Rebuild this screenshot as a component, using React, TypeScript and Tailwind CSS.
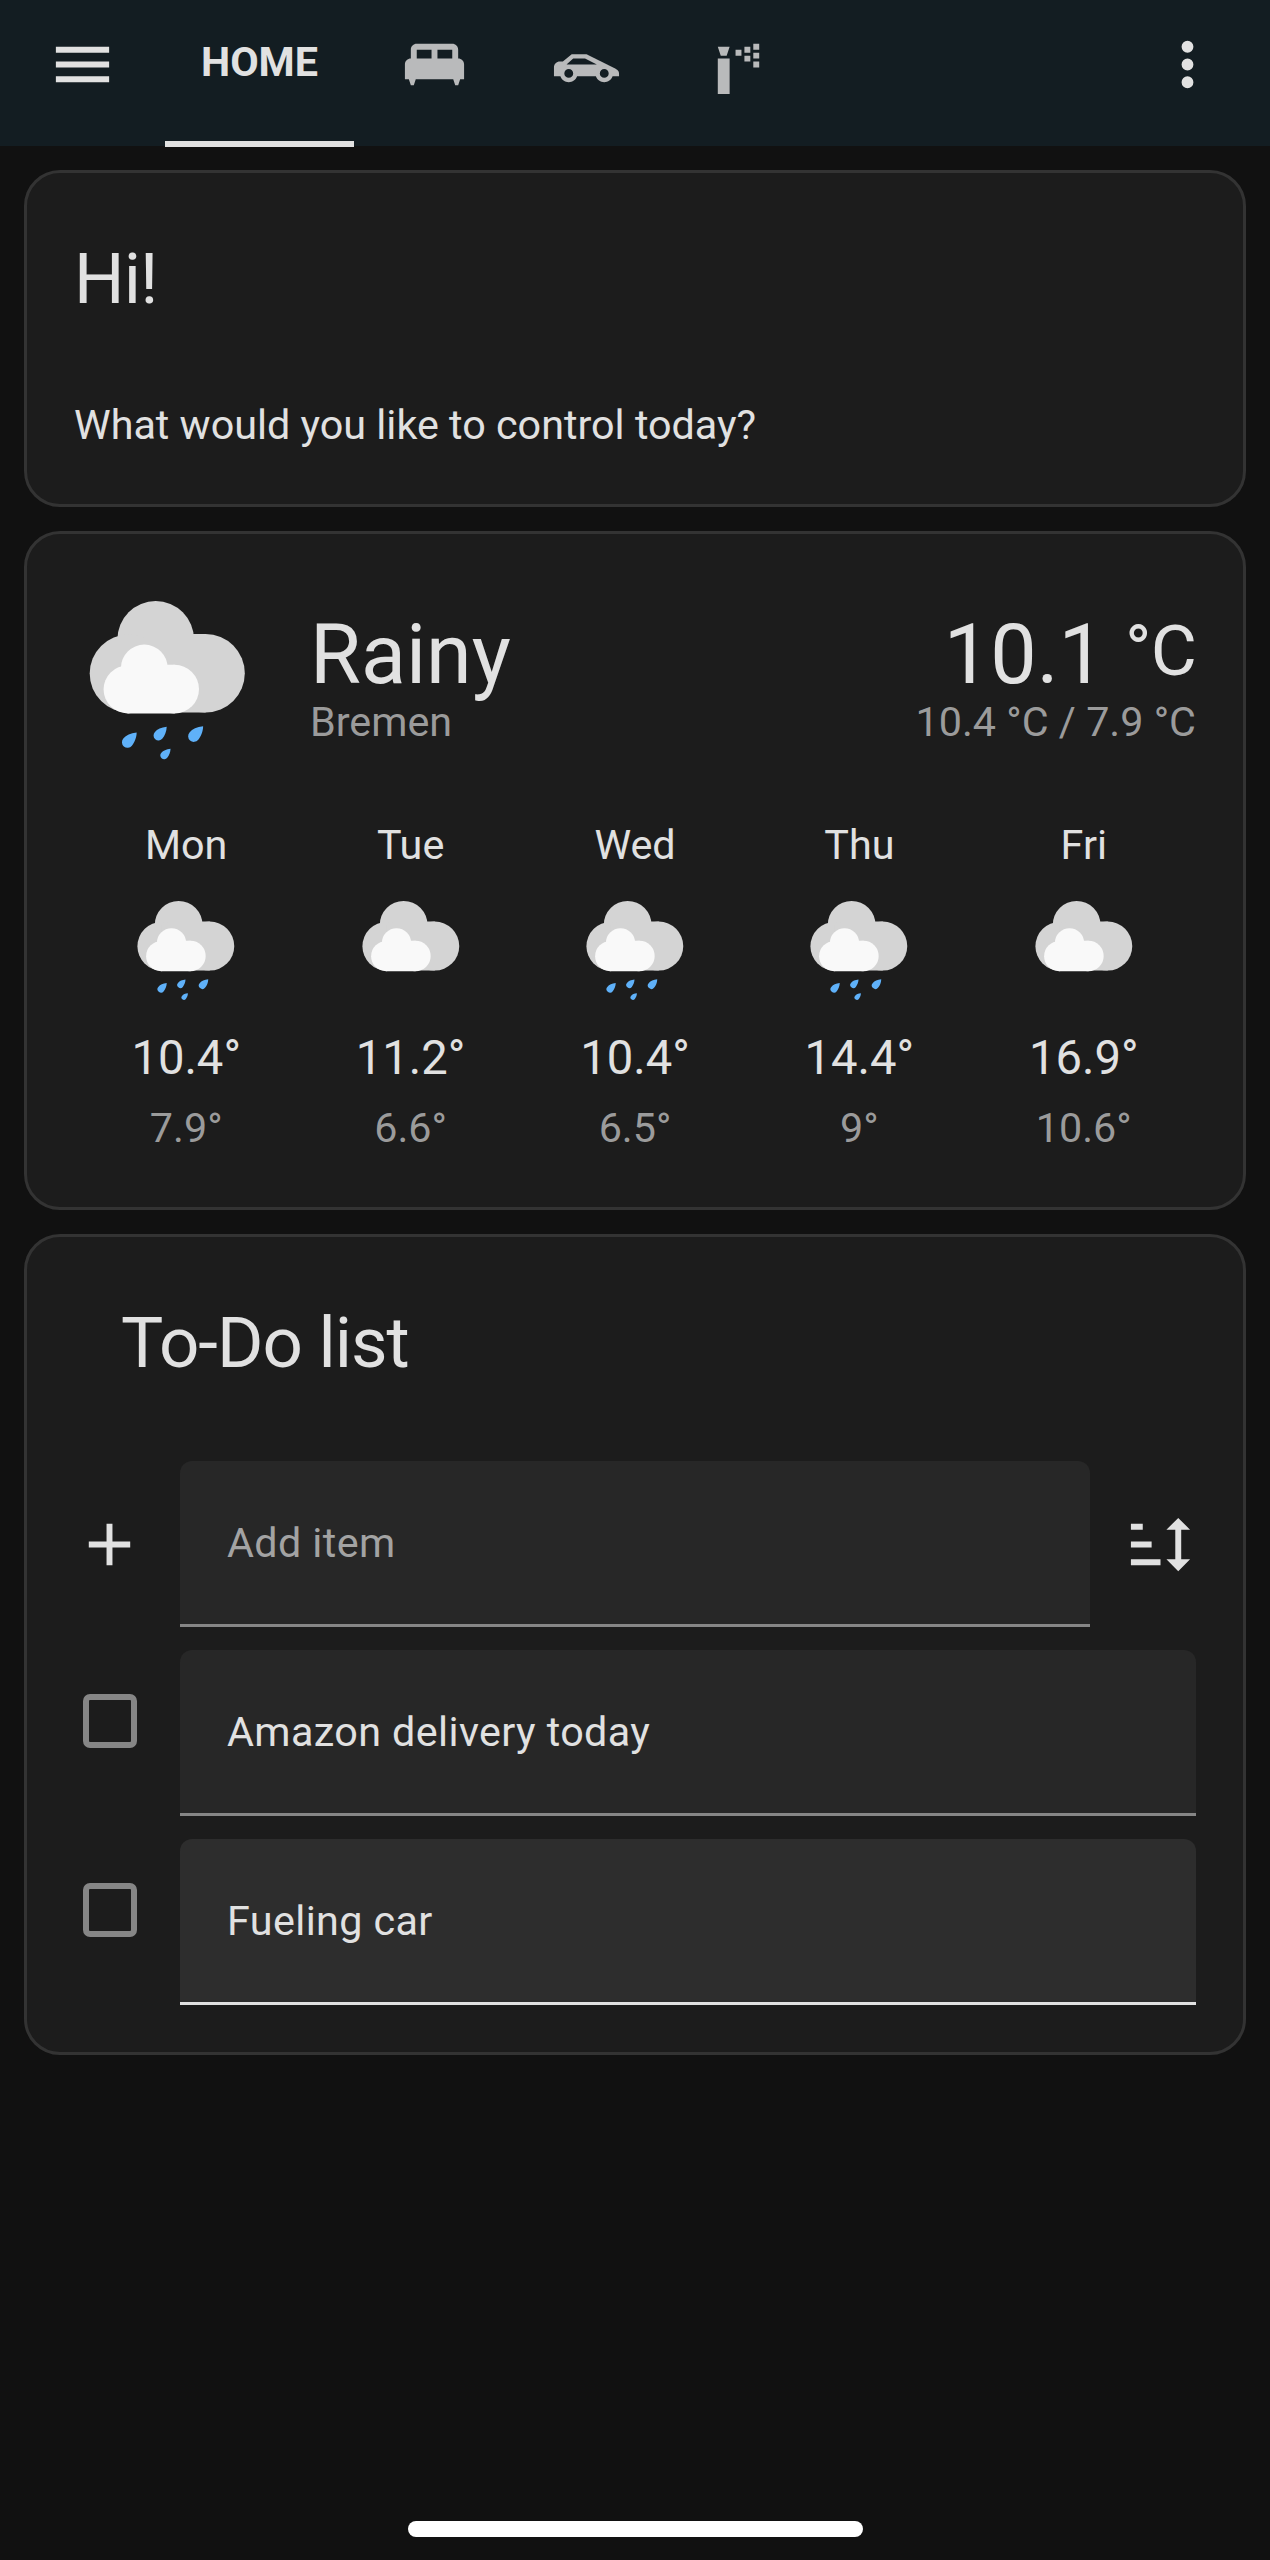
import type { ReactNode } from "react";
import { clsx } from "clsx";

interface ForecastDay {
  day: string;
  condition: "rainy" | "cloudy";
  high: string;
  low: string;
}

interface TodoItem {
  id: number;
  summary: string;
  active: boolean;
}

const forecast: ForecastDay[] = [
  { day: "Mon", condition: "rainy", high: "10.4°", low: "7.9°" },
  { day: "Tue", condition: "cloudy", high: "11.2°", low: "6.6°" },
  { day: "Wed", condition: "rainy", high: "10.4°", low: "6.5°" },
  { day: "Thu", condition: "rainy", high: "14.4°", low: "9°" },
  { day: "Fri", condition: "cloudy", high: "16.9°", low: "10.6°" },
];

const todos: TodoItem[] = [
  { id: 1, summary: "Amazon delivery today", active: false },
  { id: 2, summary: "Fueling car", active: true },
];

const icons = {
  menu: "M3 6H21V8H3V6M3 11H21V13H3V11M3 16H21V18H3V16Z",
  dots: "M12 16A2 2 0 0 1 14 18A2 2 0 0 1 12 20A2 2 0 0 1 10 18A2 2 0 0 1 12 16M12 10A2 2 0 0 1 14 12A2 2 0 0 1 12 14A2 2 0 0 1 10 12A2 2 0 0 1 12 10M12 4A2 2 0 0 1 14 6A2 2 0 0 1 12 8A2 2 0 0 1 10 6A2 2 0 0 1 12 4Z",
  bed: "M4 10C2.9 10 2 10.9 2 12V17H3.33L4 19H5L5.67 17H18.33L19 19H20L20.67 17H22V12C22 10.9 21.1 10 20 10V7C20 5.9 19.1 5 18 5H6C4.9 5 4 5.9 4 7V10M11 10H6V7H11V10M18 10H13V7H18V10Z",
  car: "M12 8.5H7L4 11H3C1.89 11 1 11.89 1 13V16H3.17C3.6 17.2 4.73 18 6 18C7.27 18 8.4 17.2 8.82 16H15.17C15.6 17.2 16.73 18 18 18C19.27 18 20.4 17.2 20.82 16H23V15C23 13.89 21.97 13.53 21 13L12 8.5M5.25 12L7.5 10H11.5L15.5 12H5.25M6 13.5A1.5 1.5 0 0 1 7.5 15A1.5 1.5 0 0 1 6 16.5A1.5 1.5 0 0 1 4.5 15A1.5 1.5 0 0 1 6 13.5M18 13.5A1.5 1.5 0 0 1 19.5 15A1.5 1.5 0 0 1 18 16.5A1.5 1.5 0 0 1 16.5 15A1.5 1.5 0 0 1 18 13.5Z",
  sprinkler:
    "M5 10H9V22H5V10M5 6H9L8 9H6L5 6M11 7H13V9H11V7M14 6H16V8H14V6M14 9H16V11H14V9M17 5H19V7H17V5M17 8H19V10H17V8M17 11H19V13H17V11Z",
  plus: "M19 13H13V19H11V13H5V11H11V5H13V11H19V13Z",
  sort: "M18 21L14 17H17V7H14L18 3L22 7H19V17H22M2 19V17H12V19M2 13V11H9V13M2 7V5H6V7H2Z",
};

function Icon({ name, className }: { name: keyof typeof icons; className?: string }) {
  return (
    <svg viewBox="0 0 24 24" fillRule="evenodd" className={clsx("h-[71px] w-[71px] shrink-0 fill-current", className)}>
      <path d={icons[name]} />
    </svg>
  );
}

const drops = [
  { x: 54.7, y: 157, r: 5.6 },
  { x: 85.7, y: 150.3, r: 5 },
  { x: 121, y: 151, r: 5.7 },
  { x: 91.3, y: 170.3, r: 3.9 },
];

function WeatherIcon({ condition, className }: { condition: ForecastDay["condition"]; className?: string }) {
  return (
    <svg viewBox="0 0 189 189" className={clsx("shrink-0", className)}>
      <g fill="#d4d4d4">
        <circle cx="82.7" cy="54.3" r="38.3" />
        <circle cx="55.7" cy="88.5" r="39" />
        <circle cx="132.6" cy="88.2" r="39.2" />
        <path d="M55.7 54H82V49H132.6V127.4H55.7Z" />
      </g>
      <g fill="#f9f9f9">
        <circle cx="71.3" cy="83" r="23.4" />
        <circle cx="54.6" cy="104.4" r="24" />
        <circle cx="101.7" cy="104.1" r="24.3" />
        <path d="M54.6 84H71V79.8H101.7V128.4H54.6Z" />
      </g>
      {condition === "rainy" && (
        <g fill="#5fb1f9">
          {drops.map((d) => (
            <path
              key={d.x}
              transform={`translate(${d.x} ${d.y}) scale(${d.r})`}
              d="M1.6-1.7C.5-1.6-.3-1.2-.75-.66A1 1 0 1 0 .75.66C1.2.1 1.6-.8 1.6-1.7Z"
            />
          ))}
        </g>
      )}
    </svg>
  );
}

function Card({ className, children }: { className?: string; children: ReactNode }) {
  return (
    <section className={clsx("rounded-[36px] border-[3px] border-[#333333] bg-[#1c1c1c] px-[47px]", className)}>
      {children}
    </section>
  );
}

function Header() {
  return (
    <header className="flex h-[146px] bg-[#131d22] pr-[47px] pl-[47px]">
      <button className="mt-[28.5px] mr-[47px] h-[71px]">
        <Icon name="menu" />
      </button>
      <nav className="flex h-[147px] flex-1 text-[#b9babb]">
        <div className="flex w-[189px] justify-center border-b-[6px] border-[#e1e1e1] pt-[33px] text-[41.3px] leading-[59px] font-bold text-[#e1e1e1]">
          HOME
        </div>
        <div className="ml-[4px] flex w-[152px] justify-center pt-[28.5px]">
          <Icon name="bed" />
        </div>
        <div className="flex w-[152px] justify-center pt-[28.5px]">
          <Icon name="car" />
        </div>
        <div className="flex w-[152px] justify-center pt-[28.5px]">
          <Icon name="sprinkler" />
        </div>
      </nav>
      <button className="mt-[28.5px] h-[71px]">
        <Icon name="dots" />
      </button>
    </header>
  );
}

function WeatherCard() {
  return (
    <Card className="h-[679px] pt-[51px]">
      <div className="-ml-px flex h-[189px]">
        <WeatherIcon condition="rainy" className="h-[189px] w-[189px]" />
        <div className="flex flex-1 justify-between pt-[30px] pl-[48px]">
          <div>
            <div className="text-[82.7px] leading-[80px]">Rainy</div>
            <div className="text-[41.3px] leading-[55px] text-[#9b9b9b]">Bremen</div>
          </div>
          <div className="text-right">
            <div className="flex justify-end text-[82.7px] leading-[80px]">
              10.1
              <span className="ml-[20px] text-[70.9px] leading-[71px] tracking-[-0.012em]">°C</span>
            </div>
            <div className="text-[41.3px] leading-[55px] text-[#9b9b9b]">10.4 °C / 7.9 °C</div>
          </div>
        </div>
      </div>
      <div className="mt-[42px] grid grid-cols-5">
        {forecast.map((f) => (
          <div key={f.day} className="flex flex-col items-center text-[41.3px] leading-[59px]">
            <div>{f.day}</div>
            <WeatherIcon condition={f.condition} className="mt-[16px] h-[118px] w-[118px]" />
            <div className="mt-[20px] text-[47.2px]">{f.high}</div>
            <div className="mt-[11px] text-[#9b9b9b]">{f.low}</div>
          </div>
        ))}
      </div>
    </Card>
  );
}

function TodoCard() {
  return (
    <Card className="h-[821px] pt-[35px]">
      <h1 className="pl-[47px] text-[70.9px] leading-[142px] tracking-[-0.014em]">To-Do list</h1>
      <div className="mt-[47px] flex flex-col gap-[23px] text-[41.3px] tracking-[0.009375em]">
        <div className="flex h-[166px] items-center">
          <div className="w-[106px]">
            <Icon name="plus" />
          </div>
          <div className="flex h-full w-[910px] items-center rounded-t-[12px] border-b-[3px] border-[#868686] bg-[#272727] pt-[2px] pl-[47px] text-[#a3a3a3]">
            Add item
          </div>
          <Icon name="sort" className="ml-[35px]" />
        </div>
        {todos.map((item) => (
          <div key={item.id} className="flex h-[166px]">
            <div className="w-[106px] pt-[44px] pl-[9px]">
              <div className="h-[54px] w-[54px] rounded-[7px] border-[6px] border-[#868686]" />
            </div>
            <div
              className={clsx(
                "flex flex-1 items-center rounded-t-[12px] border-b-[3px] pt-[2px] pl-[47px]",
                item.active ? "border-[#e1e1e1] bg-[#2d2d2d]" : "border-[#868686] bg-[#272727]"
              )}
            >
              {item.summary}
            </div>
          </div>
        ))}
      </div>
    </Card>
  );
}

export default function App() {
  return (
    <div className="flex min-h-[2560px] flex-col bg-[#111111] font-['Roboto',sans-serif] text-[#e1e1e1]">
      <Header />
      <main className="flex flex-col gap-[24px] px-[24px] pt-[24px]">
        <Card className="h-[337px] pt-[35px]">
          <h1 className="text-[70.9px] leading-[142px] tracking-[-0.012em]">Hi!</h1>
          <p className="mt-[46px] text-[41.3px] leading-[59px]">What would you like to control today?</p>
        </Card>
        <WeatherCard />
        <TodoCard />
      </main>
      <div className="mx-auto mt-auto mb-[23px] h-[16px] w-[455px] rounded-full bg-white" />
    </div>
  );
}
